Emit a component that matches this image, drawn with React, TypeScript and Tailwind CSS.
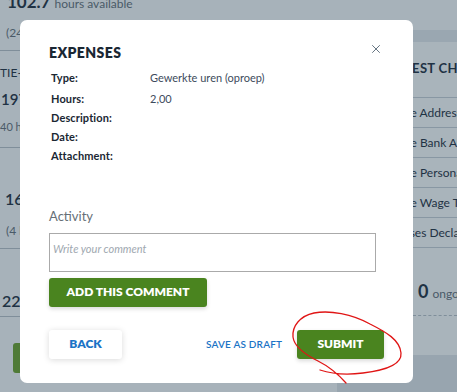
import type React from "react"
import { X } from "lucide-react"

const font = { fontFamily: 'Lato, "Liberation Sans", sans-serif' }

const details = [
  { label: "Type:", value: "Gewerkte uren (oproep)" },
  { label: "Hours:", value: "2,00" },
  { label: "Description:", value: "" },
  { label: "Date:", value: "" },
  { label: "Attachment:", value: "" },
]

const changes = ["Change Address", "Change Bank Account", "Change Personal Data", "Change Wage Tax", "Expenses Declaration"]

const App: React.FC = () => {
  return (
    <div className="relative w-[457px] h-[392px] overflow-hidden bg-[#a7b2ba] text-[#1f3244]" style={font}>
      {/* pagina achter de overlay */}
      <div className="flex h-full">
        {/* linker kolom met uren */}
        <div className="w-[80px] shrink-0 whitespace-nowrap">
          <div className="flex items-end h-[10px]">
            <div className="w-[3px] h-[9px] bg-[#2b6cb0]" />
            <span className="ml-[7px] text-[17px] font-bold leading-none">102.7</span>
            <span className="ml-[4px] text-[12px] leading-none text-[#4a5a68]">hours available</span>
          </div>
          <div className="mt-[14px] ml-[6px] text-[12px] text-[#4a5a68]">(24 hrs)</div>
          <div className="mt-[8px] w-[20px] border-t border-[#7f8e9a]" />
          <div className="mt-[13px] text-[12px]">TIE-UREN</div>
          <div className="mt-[10px] ml-[1px] text-[15px] font-semibold leading-none">197</div>
          <div className="mt-[12px] text-[11px] text-[#4a5a68]">40 hrs</div>
          <div className="mt-[11px] w-[20px] border-t border-[#7f8e9a]" />
          <div className="mt-[43px] ml-[5px] text-[16px] font-semibold leading-none">16</div>
          <div className="mt-[15px] ml-[6px] text-[12px] text-[#4a5a68]">(4 hrs)</div>
          <div className="mt-[8px] w-[20px] border-t border-[#7f8e9a]" />
          <div className="mt-[44px] ml-[2px] text-[16px] font-semibold leading-none">22.5</div>
          <div className="mt-[7px] w-[20px] border-t border-[#7f8e9a]" />
          <div className="mt-[26px] ml-[13px] w-[40px] h-[30px] rounded-[3px] bg-[#4f7a37]" />
        </div>

        <div className="flex-1" />

        {/* rechter kaart */}
        <div className="w-[120px] shrink-0 flex flex-col whitespace-nowrap">
          <div className="h-[30px]" />
          <div className="h-[12px] bg-[#9aa7b1]" />
          <div className="flex-1 flex flex-col bg-[#a9b4bb]">
            <div className="pl-[38px] mt-[17px] text-[13px] font-bold tracking-wide leading-[18px]">REQUEST CHANGES</div>
            <div className="mt-[20px] border-t border-[#8897a3]" />
            {changes.map((c) => (
              <div key={c} className="h-[30px] pl-[40px] flex items-center border-b border-[#8897a3] text-[12px]">
                {c}
              </div>
            ))}
            <div className="mt-[30px] flex items-baseline gap-[4px] pl-[81px]">
              <span className="text-[18px] font-bold">0</span>
              <span className="text-[12px] text-[#4a5a68]">ongoing</span>
            </div>
            <div className="mt-[10px] ml-[76px] border-t border-dashed border-[#7f8e9a]" />
          </div>
          <div className="h-[37px] bg-[#98a5af]" />
        </div>
      </div>

      {/* modal */}
      <div className="absolute left-[20px] top-[20px] w-[393px] h-[363px] bg-white rounded-[7px] pl-[29px] pr-[29px] pt-[20px]">
        <div className="flex items-start justify-between">
          <h2 className="text-[14px] font-extrabold tracking-[0.03em] text-[#1a2733] mt-[2px]">EXPENSES</h2>
          <button className="mt-[2px] mr-[1px] text-[#5a6a78]">
            <X className="w-[14px] h-[14px]" strokeWidth={1.6} />
          </button>
        </div>

        <div className="mt-[4px] ml-[2px]">
          {details.map((d, i) => (
            <div key={d.label} className={`flex items-center ${i === 0 ? "h-[23px]" : "h-[19px]"}`}>
              <span className="w-[99px] text-[11px] font-bold tracking-[0.01em] text-[#1a2733]">{d.label}</span>
              <span className="text-[11px] text-[#3d4b5c]">{d.value}</span>
            </div>
          ))}
        </div>

        <div className="mt-[41px] text-[13px] text-[#666f77]">Activity</div>
        <div className="mt-[6px] w-[327px] h-[39px] border border-[#aaaaaa] px-[3px] pt-[1px]">
          <span className="text-[11px] italic text-[#a0a8b0]">Write your comment</span>
        </div>
        <button className="mt-[6px] w-[158px] h-[29px] rounded-[3px] bg-[#4a841f] text-white text-[12px] font-extrabold shadow-[0_2px_4px_rgba(0,0,0,0.15)]">
          ADD THIS COMMENT
        </button>

        <div className="mt-[23px] flex items-center whitespace-nowrap">
          <button className="w-[73px] h-[29px] rounded-[3px] bg-white text-[#1b73c6] text-[12px] font-extrabold shadow-[0_1px_6px_rgba(0,0,0,0.15)]">
            BACK
          </button>
          <button className="ml-[84px] w-[69px] text-[10px] font-semibold tracking-[0.02em] text-[#1b73c6]">SAVE AS DRAFT</button>
          <button className="ml-[22px] w-[87px] h-[29px] rounded-[3px] bg-[#4a841f] text-white text-[12px] font-extrabold shadow-[0_2px_4px_rgba(0,0,0,0.15)]">
            SUBMIT
          </button>
        </div>
      </div>

      {/* rode markering rond submit */}
      <svg className="absolute left-0 top-0 pointer-events-none" width="457" height="392" viewBox="0 0 457 392">
        <path
          d="M346 383 C 338 374, 328 366, 318 361 C 304 354, 294 346, 293 337 C 292 326, 300 316, 314 313 C 330 310, 352 314, 370 324 C 386 332, 400 340, 401 353 C 402 364, 388 370, 363 373 C 348 375, 332 374, 320 370"
          fill="none"
          stroke="#e01515"
          strokeWidth="1.3"
          strokeLinecap="round"
        />
      </svg>
    </div>
  )
}

export default App
